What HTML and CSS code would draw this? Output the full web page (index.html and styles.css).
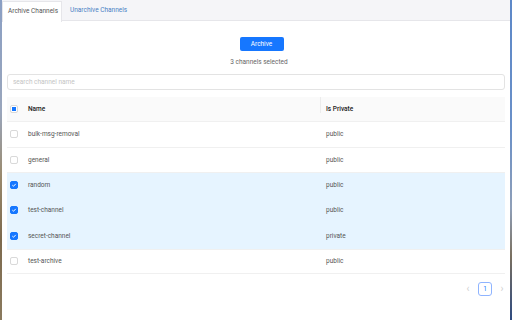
FILE: index.html
```html
<!DOCTYPE html>
<html>
<head>
<meta charset="utf-8">
<link rel="stylesheet" href="styles.css">
</head>
<body>
<div class="frame">
  <div class="edge edge-left"></div>
  <div class="app">
    <div class="tabs">
      <div class="tab active">Archive Channels</div>
      <div class="tab link">Unarchive Channels</div>
    </div>
    <div class="content">
      <div class="actions">
        <button class="btn">Archive</button>
        <div class="selected">3 channels selected</div>
      </div>
      <input class="search" type="text" placeholder="search channel name">
      <div class="table">
        <div class="row head">
          <div class="cell chk"><span class="box indeterminate"></span></div>
          <div class="cell name">Name</div>
          <div class="cell priv"><span class="divider"></span>Is Private</div>
        </div>
        <div class="row">
          <div class="cell chk"><span class="box"></span></div>
          <div class="cell name">bulk-msg-removal</div>
          <div class="cell priv">public</div>
        </div>
        <div class="row">
          <div class="cell chk"><span class="box"></span></div>
          <div class="cell name">general</div>
          <div class="cell priv">public</div>
        </div>
        <div class="row sel">
          <div class="cell chk"><span class="box checked"><svg viewBox="0 0 10 10"><path d="M2.2 5.2 L4.2 7.1 L7.9 3.1" /></svg></span></div>
          <div class="cell name">random</div>
          <div class="cell priv">public</div>
        </div>
        <div class="row sel">
          <div class="cell chk"><span class="box checked"><svg viewBox="0 0 10 10"><path d="M2.2 5.2 L4.2 7.1 L7.9 3.1" /></svg></span></div>
          <div class="cell name">test-channel</div>
          <div class="cell priv">public</div>
        </div>
        <div class="row sel">
          <div class="cell chk"><span class="box checked"><svg viewBox="0 0 10 10"><path d="M2.2 5.2 L4.2 7.1 L7.9 3.1" /></svg></span></div>
          <div class="cell name">secret-channel</div>
          <div class="cell priv">private</div>
        </div>
        <div class="row">
          <div class="cell chk"><span class="box"></span></div>
          <div class="cell name">test-archive</div>
          <div class="cell priv">public</div>
        </div>
      </div>
      <div class="pager">
        <span class="arrow">&lsaquo;</span>
        <span class="page">1</span>
        <span class="arrow">&rsaquo;</span>
      </div>
    </div>
  </div>
  <div class="edge edge-right"></div>
</div>
</body>
</html>
```

FILE: styles.css
```css
* { box-sizing: border-box; }
html, body { margin: 0; padding: 0; }
body {
  width: 512px;
  height: 320px;
  overflow: hidden;
  font-family: Roboto, "Liberation Sans", sans-serif;
  font-size: 6.5px;
  color: #555;
}
.frame {
  display: flex;
  height: 320px;
}
.edge { width: 2px; flex: none; }
.edge-left {
  background: linear-gradient(#8a9fc4 0%, #9aa6bc 35%, #9a8a6e 55%, #7d6a4e 75%, #8a7a5e 100%);
}
.edge-right {
  background: linear-gradient(#5d88c8 0%, #6a90c8 40%, #8f9fb8 65%, #7a7060 80%, #2e4a80 100%);
}
.app {
  flex: 1;
  background: #fff;
  display: flex;
  flex-direction: column;
}
.tabs {
  display: flex;
  height: 21px;
  background: #f5f5f8;
  border-bottom: 1px solid #e6e6ea;
}
.tab {
  white-space: nowrap;
  font-size: 6.5px;
}
.tab.active {
  background: #fff;
  color: #555;
  border: 1px solid #e6e6ea;
  border-bottom: none;
  width: 60px;
  padding: 0 0 0 5px;
  margin-top: 1px;
  line-height: 18px;
  height: 21px;
  margin-bottom: -1px;
}
.tab.link {
  color: #4a7fc4;
  padding-left: 8px;
  line-height: 20px;
}
.content {
  padding: 0 5px;
  display: flex;
  flex-direction: column;
}
.actions {
  display: flex;
  flex-direction: column;
  align-items: center;
  padding-top: 16px;
  padding-left: 6px;
}
.btn {
  width: 44px;
  height: 14px;
  border: none;
  border-radius: 2px;
  background: #1677ff;
  color: #fff;
  font-family: inherit;
  font-size: 6.5px;
  padding: 0;
  line-height: 14px;
  margin-left: 5px;
}
.selected {
  margin-top: 6px;
  color: #666;
  line-height: 10px;
}
.search {
  margin-top: 7px;
  height: 16px;
  width: 100%;
  border: 1px solid #e3e3e3;
  border-radius: 3px;
  padding: 0 5px;
  font-family: inherit;
  font-size: 6.5px;
  color: #444;
  outline: none;
}
.search::placeholder { color: #c4c4c4; }
.table {
  margin-top: 7px;
  display: flex;
  flex-direction: column;
}
.row {
  display: flex;
  align-items: center;
  height: 25.3px;
  border-bottom: 1px solid #f0f0f0;
}
.row.head {
  background: #fafafa;
  color: #222;
  font-weight: 500;
}
.row.sel { background: #e6f4ff; border-bottom-color: #e6f4ff; }
.row.sel + .row:not(.sel) { border-top: 1px solid #f0f0f0; }
.cell { position: relative; }
.chk {
  width: 21px;
  padding-left: 3px;
  display: flex;
  align-items: center;
}
.name { width: 292px; }
.priv { padding-left: 6px; }
.divider {
  position: absolute;
  left: 0;
  top: -8px;
  width: 1px;
  height: 16px;
  background: #ececec;
}
.box {
  width: 8px;
  height: 8px;
  border: 1px solid #d9d9d9;
  border-radius: 2px;
  background: #fff;
  display: inline-flex;
  align-items: center;
  justify-content: center;
}
.box.indeterminate::after {
  content: "";
  width: 4px;
  height: 4px;
  background: #1677ff;
}
.box.checked {
  background: #1677ff;
  border-color: #1677ff;
}
.box svg {
  width: 8px;
  height: 8px;
  fill: none;
  stroke: #fff;
  stroke-width: 1.6;
}
.pager {
  display: flex;
  justify-content: flex-end;
  align-items: center;
  margin-top: 8px;
  margin-right: -4px;
  gap: 3px;
}
.arrow {
  width: 14px;
  text-align: center;
  color: #cfcfcf;
  font-size: 10px;
  line-height: 14px;
}
.page {
  width: 14px;
  height: 14px;
  border: 1px solid #8fb4ff;
  border-radius: 3px;
  color: #1677ff;
  text-align: center;
  line-height: 12px;
  font-size: 6.5px;
}
```
